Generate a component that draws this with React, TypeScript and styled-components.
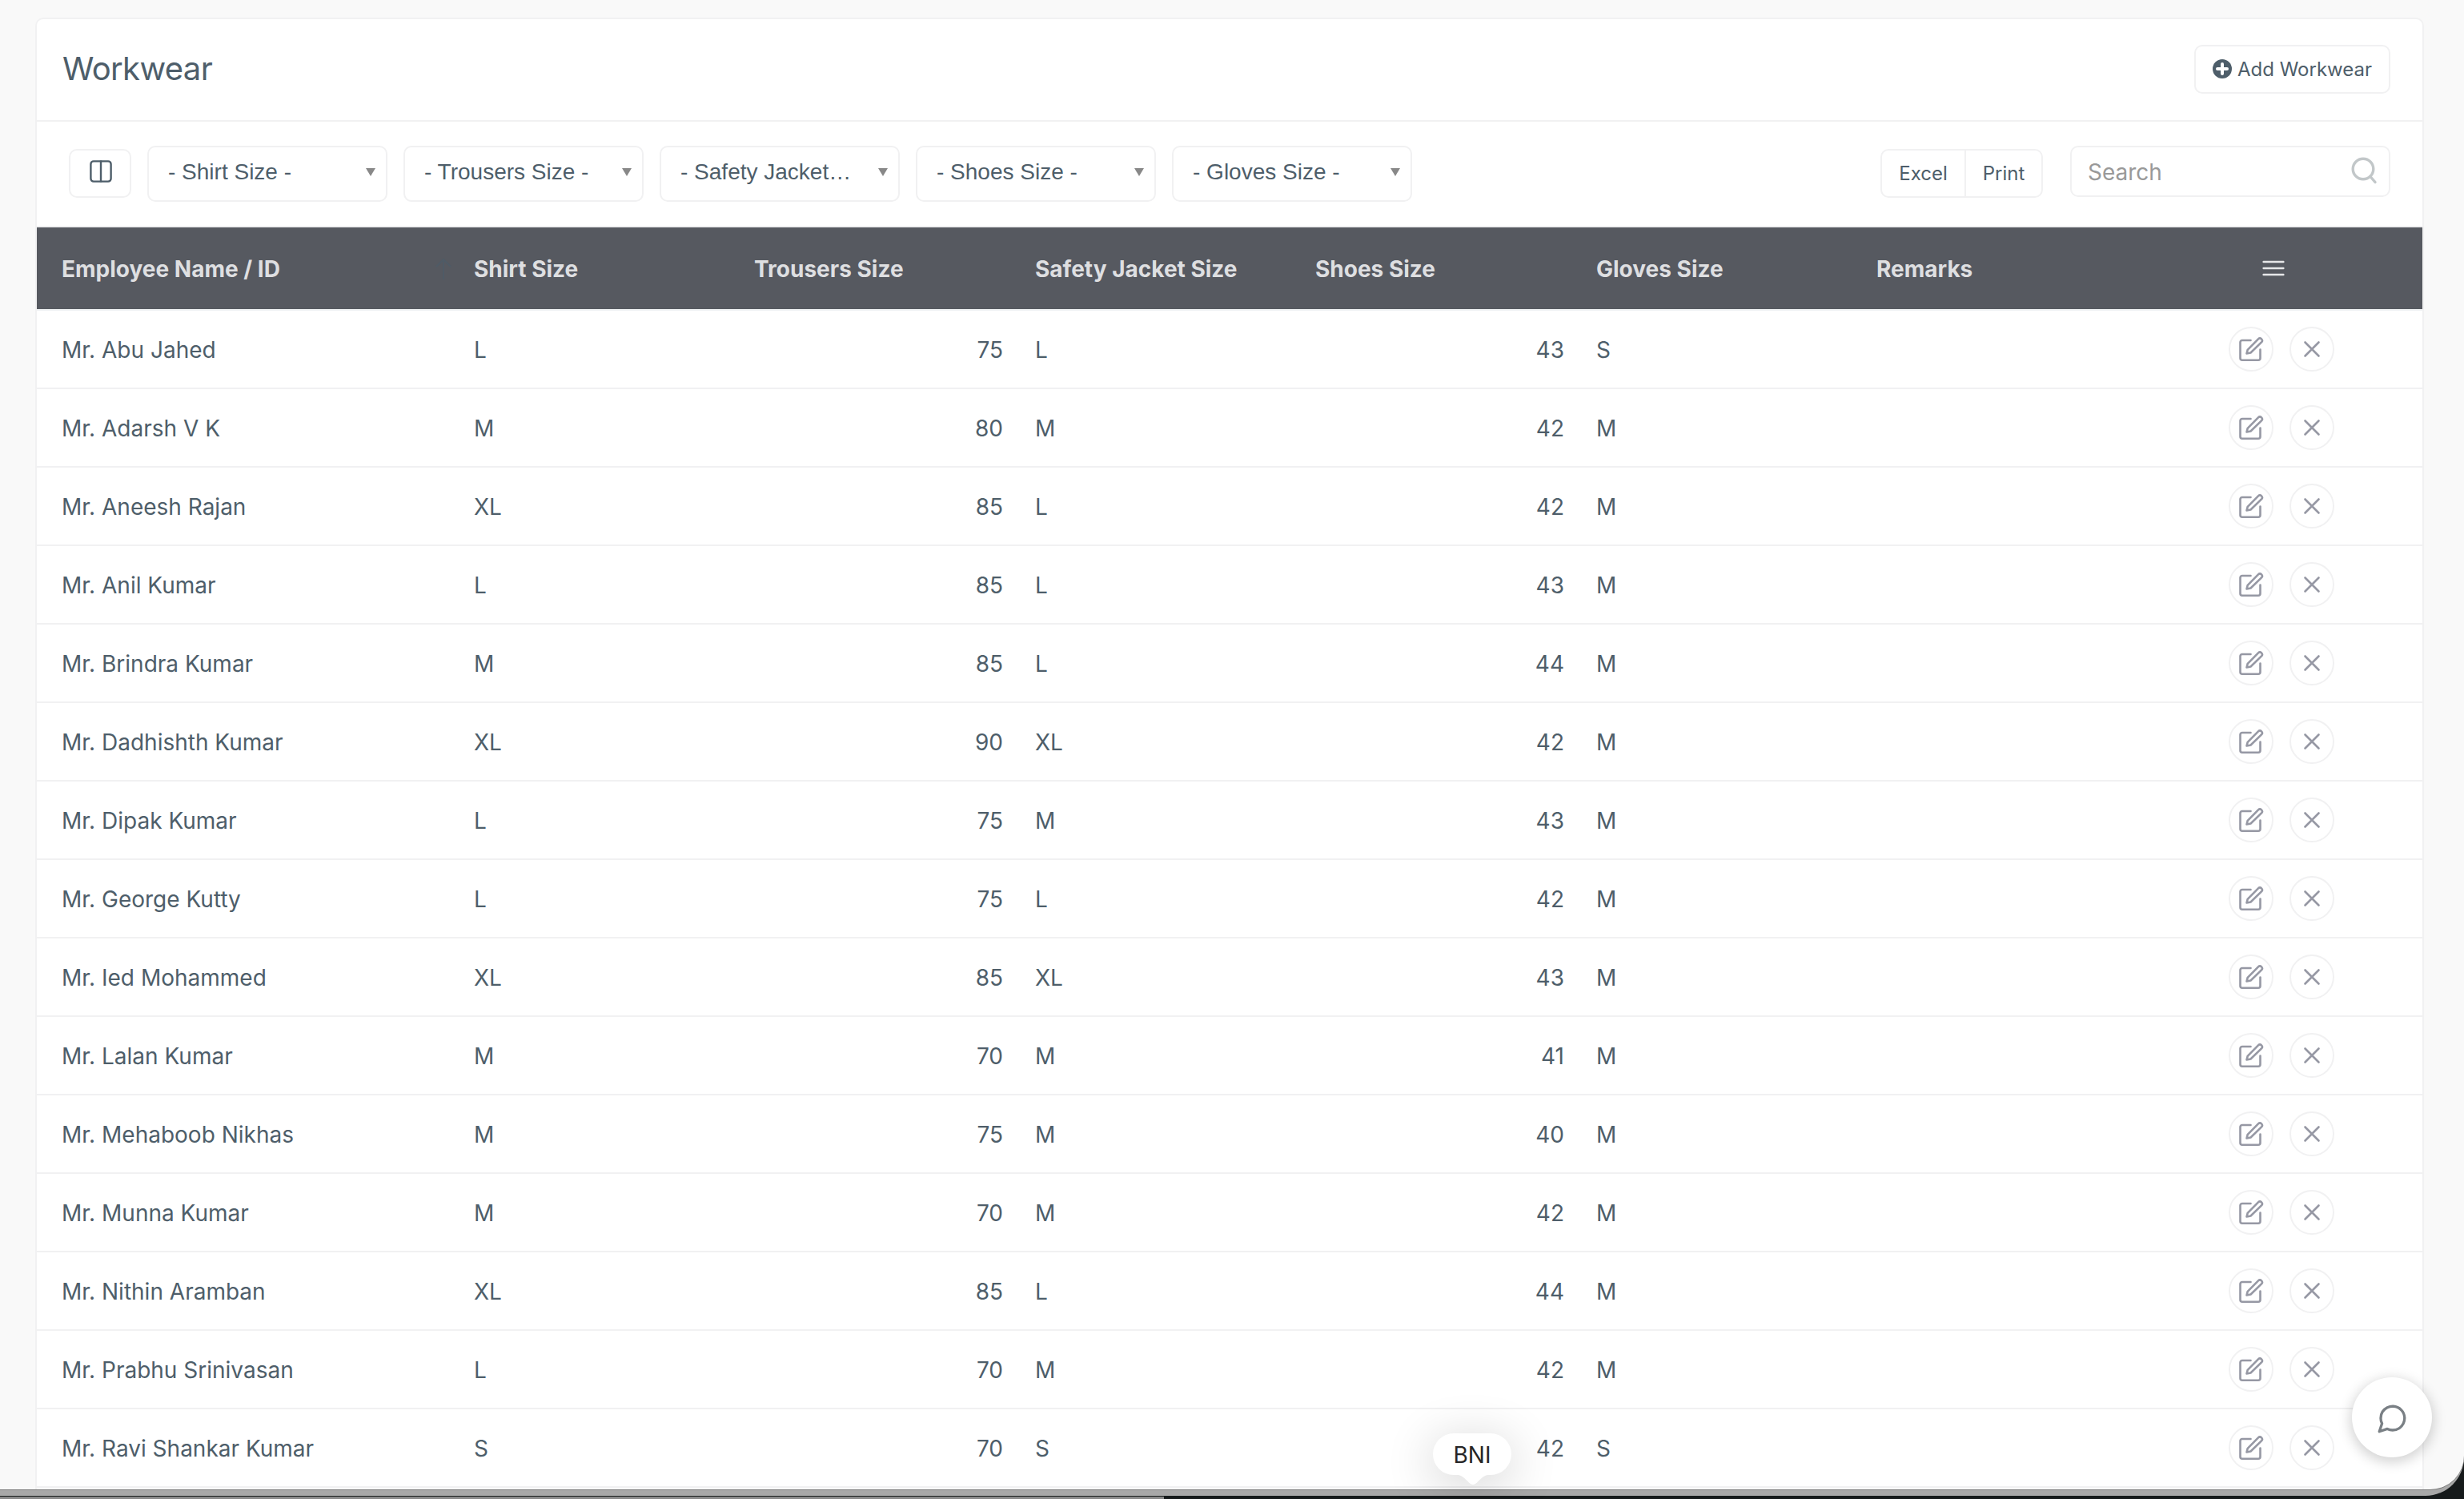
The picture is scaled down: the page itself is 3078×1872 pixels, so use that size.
import React from "react";
import styled, { createGlobalStyle, css } from "styled-components";

const GlobalStyle = createGlobalStyle`
  * {
    box-sizing: border-box;
  }

  body {
    margin: 0;
    background: #1b2022;
    font-family: Inter, "Liberation Sans", sans-serif;
    color: #4e5e6a;
    overflow: hidden;
  }
`;

const Desktop = styled.div`
  position: relative;
  display: flex;
  flex-direction: column;
  height: 1872px;
  overflow: hidden;
  background: #161a1b;
`;

const WindowFrame = styled.div`
  flex: none;
  height: 1868px;
  padding-bottom: 8px;
  border-bottom-right-radius: 48px;
  background: #a8a8a8;
`;

const Page = styled.main`
  height: 1860px;
  padding: 22px 50px 0 44px;
  border-bottom-right-radius: 42px;
  background: #f9f9f9;
  box-shadow: 0 1px 0 #7c7c7c;
  overflow: hidden;
`;

const Card = styled.section`
  height: 1838px;
  border: 2px solid #f1f1f2;
  border-bottom: none;
  border-radius: 10px 10px 0 0;
  background: #fff;
`;

const CardHeader = styled.header`
  display: flex;
  align-items: center;
  justify-content: space-between;
  height: 128px;
  padding: 0 40px 2px 32px;
  border-bottom: 2px solid #f1f1f2;
`;

const Title = styled.h1`
  margin: 0;
  font-size: 40px;
  font-weight: 400;
  line-height: 48px;
  letter-spacing: -0.65px;
`;

const buttonBase = css`
  display: flex;
  align-items: center;
  justify-content: center;
  padding: 0;
  border: 2px solid #f1f1f2;
  border-radius: 10px;
  background: #fff;
  color: #4e5e6a;
  font-family: inherit;
`;

const AddButton = styled.button`
  ${buttonBase}
  gap: 7px;
  width: 245px;
  height: 61px;
  font-size: 24px;
`;

const Toolbar = styled.div`
  display: flex;
  align-items: flex-start;
  height: 132px;
  padding: 30px 40px 0 40px;
  border-bottom: 2px solid #f1f1f2;
`;

const ColumnsButton = styled.button`
  ${buttonBase}
  width: 78px;
  height: 61px;
  margin: 4px 20px 0 0;
  padding: 0 0 5px 2px;
`;

const Filter = styled.div`
  display: flex;
  align-items: center;
  justify-content: space-between;
  width: 300px;
  height: 70px;
  margin-right: 20px;
  padding: 0 13px 5px 24px;
  border: 2px solid #f1f1f2;
  border-radius: 10px;
  font-family: "Liberation Sans", Arial, sans-serif;
  font-size: 28px;
  line-height: 34px;
  white-space: nowrap;
`;

const Caret = styled.span`
  width: 0;
  border: 6px solid transparent;
  border-top: 10px solid #888;
  border-bottom: none;
`;

const ExportGroup = styled.div`
  display: flex;
  width: 203px;
  height: 61px;
  margin: 4px 34px 0 auto;
  border: 2px solid #f1f1f2;
  border-radius: 10px;
`;

const ExportButton = styled.button<{ $width: number }>`
  width: ${(p) => p.$width}px;
  padding: 0;
  border: none;
  background: none;
  color: #4e5e6a;
  font-family: inherit;
  font-size: 24px;

  & + & {
    border-left: 2px solid #f1f1f2;
  }
`;

const SearchBox = styled.label`
  display: flex;
  align-items: center;
  width: 400px;
  height: 64px;
  padding: 0 14px 0 20px;
  border: 2px solid #f1f1f2;
  border-radius: 10px;
`;

const SearchInput = styled.input`
  flex: 1;
  min-width: 0;
  padding: 2px 0 0;
  border: none;
  outline: none;
  background: none;
  font-family: inherit;
  font-size: 28px;

  &::placeholder {
    color: #999;
    opacity: 1;
  }
`;

const rowGrid = css`
  display: grid;
  grid-template-columns: 516px 350px 351px 350px 351px 350px 350px 362px;
  align-items: center;
`;

const HeadRow = styled.div`
  ${rowGrid}
  height: 104px;
  border-bottom: 2px solid #eff1f3;
  background: #565960;
  background-clip: padding-box;
  color: #dedfe1;
  font-size: 28px;
  font-weight: 700;
`;

const Row = styled.div`
  ${rowGrid}
  height: 98px;
  border-bottom: 2px solid #f1f1f2;
  font-size: 28px;
`;

const Cell = styled.div<{ $right?: boolean }>`
  display: flex;
  align-items: center;
  justify-content: ${(p) => (p.$right ? "flex-end" : "flex-start")};
  padding: 2px ${(p) => (p.$right ? 10 : 0)}px 0 30px;
  white-space: nowrap;

  &:first-child {
    padding-left: 31px;
  }
`;

const SortArrow = styled.svg`
  margin: 0 -3px 0 auto;
`;

const MenuCell = styled.div`
  display: flex;
  padding-left: 162px;
`;

const Actions = styled.div`
  display: flex;
  gap: 20px;
  padding-left: 120px;
`;

const RoundButton = styled.button`
  ${buttonBase}
  width: 56px;
  height: 56px;
  border-radius: 50%;
  color: #9698a4;
`;

const ChatButton = styled.button`
  position: absolute;
  left: 2938px;
  top: 1720px;
  display: flex;
  align-items: center;
  justify-content: center;
  width: 100px;
  height: 100px;
  padding: 3px 0 0;
  border: none;
  border-radius: 50%;
  background: #fff;
  color: #7a8085;
  box-shadow: 0 4px 16px 2px rgba(0, 0, 0, 0.18);
`;

const DockTip = styled.div`
  position: absolute;
  left: 1790px;
  top: 1790px;
  width: 98px;
  height: 52px;
  border-radius: 26px;
  background: #fff;
  color: #262626;
  font-size: 28px;
  line-height: 54px;
  text-align: center;
  box-shadow: 0 10px 60px 4px rgba(0, 0, 0, 0.16);
`;

const TipPointer = styled.svg`
  position: absolute;
  left: 27px;
  top: 51px;
`;

const DesktopStrip = styled.div`
  flex: none;
  width: 1454px;
  height: 3px;
  margin-top: 1px;
  background: #8a8a8a;
`;

const PlusCircle = () => (
  <svg width="24" height="24" viewBox="0 0 24 24">
    <circle cx="12" cy="12" r="12" fill="currentColor" />
    <path d="M12 6v12M6 12h12" stroke="#fff" strokeWidth="4" strokeLinecap="round" />
  </svg>
);

const ColumnsIcon = () => (
  <svg width="28" height="28" viewBox="0 0 28 28" fill="none" stroke="currentColor" strokeWidth="2.4">
    <rect x="1.4" y="1.4" width="25.2" height="25.2" rx="3.5" />
    <path d="M14 0.5v27" />
  </svg>
);

const SearchIcon = () => (
  <svg width="34" height="36" viewBox="0 0 34 36" fill="none" stroke="#c2c7c9" strokeWidth="3.4">
    <circle cx="16" cy="15" r="12.8" />
    <path d="M25 24.5L31 31.5" strokeLinecap="round" />
  </svg>
);

const MenuIcon = () => (
  <svg width="28" height="22" viewBox="0 0 28 22" stroke="#e6e7e8" strokeWidth="2.4" strokeLinecap="round">
    <path d="M1.6 3h24.8M1.6 11h24.8M1.6 19h24.8" />
  </svg>
);

const EditIcon = () => (
  <svg
    width="32"
    height="32"
    viewBox="0 0 32 32"
    fill="none"
    stroke="currentColor"
    strokeWidth="2.6"
    strokeLinecap="round"
    strokeLinejoin="round"
  >
    <path d="M15.5 5H5a2.5 2.5 0 0 0-2.5 2.5v19.7A2.5 2.5 0 0 0 5 29.7h20a2.5 2.5 0 0 0 2.5-2.5V16.5" />
    <path d="M10.5 21.5l1.2-4.6L25 3.4a2.8 2.8 0 0 1 4 4L15.5 20.5z" />
  </svg>
);

const CloseIcon = () => (
  <svg width="32" height="32" viewBox="0 0 32 32" fill="none" stroke="currentColor" strokeWidth="2.6" strokeLinecap="round">
    <path d="M24.5 7.5l-17 17M7.5 7.5l17 17" />
  </svg>
);

const ChatIcon = () => (
  <svg
    width="42"
    height="42"
    viewBox="0 0 24 24"
    fill="none"
    stroke="currentColor"
    strokeWidth="1.9"
    strokeLinejoin="round"
  >
    <path d="M21 11.5a8.38 8.38 0 0 1-.9 3.8 8.5 8.5 0 0 1-7.6 4.7 8.38 8.38 0 0 1-3.8-.9L3 21l1.9-5.7a8.38 8.38 0 0 1-.9-3.8 8.5 8.5 0 0 1 4.7-7.6 8.38 8.38 0 0 1 3.8-.9h.5a8.48 8.48 0 0 1 8 8v.5z" />
  </svg>
);

const filters = [
  "- Shirt Size -",
  "- Trousers Size -",
  "- Safety Jacket…",
  "- Shoes Size -",
  "- Gloves Size -",
];

const employees = [
  { name: "Mr. Abu Jahed", shirt: "L", trousers: 75, jacket: "L", shoes: 43, gloves: "S" },
  { name: "Mr. Adarsh V K", shirt: "M", trousers: 80, jacket: "M", shoes: 42, gloves: "M" },
  { name: "Mr. Aneesh Rajan", shirt: "XL", trousers: 85, jacket: "L", shoes: 42, gloves: "M" },
  { name: "Mr. Anil Kumar", shirt: "L", trousers: 85, jacket: "L", shoes: 43, gloves: "M" },
  { name: "Mr. Brindra Kumar", shirt: "M", trousers: 85, jacket: "L", shoes: 44, gloves: "M" },
  { name: "Mr. Dadhishth Kumar", shirt: "XL", trousers: 90, jacket: "XL", shoes: 42, gloves: "M" },
  { name: "Mr. Dipak Kumar", shirt: "L", trousers: 75, jacket: "M", shoes: 43, gloves: "M" },
  { name: "Mr. George Kutty", shirt: "L", trousers: 75, jacket: "L", shoes: 42, gloves: "M" },
  { name: "Mr. Ied Mohammed", shirt: "XL", trousers: 85, jacket: "XL", shoes: 43, gloves: "M" },
  { name: "Mr. Lalan Kumar", shirt: "M", trousers: 70, jacket: "M", shoes: 41, gloves: "M" },
  { name: "Mr. Mehaboob Nikhas", shirt: "M", trousers: 75, jacket: "M", shoes: 40, gloves: "M" },
  { name: "Mr. Munna Kumar", shirt: "M", trousers: 70, jacket: "M", shoes: 42, gloves: "M" },
  { name: "Mr. Nithin Aramban", shirt: "XL", trousers: 85, jacket: "L", shoes: 44, gloves: "M" },
  { name: "Mr. Prabhu Srinivasan", shirt: "L", trousers: 70, jacket: "M", shoes: 42, gloves: "M" },
  { name: "Mr. Ravi Shankar Kumar", shirt: "S", trousers: 70, jacket: "S", shoes: 42, gloves: "S" },
];

function App() {
  return (
    <Desktop>
      <GlobalStyle />
      <WindowFrame>
        <Page>
          <Card>
            <CardHeader>
              <Title>Workwear</Title>
              <AddButton>
                <PlusCircle />
                Add Workwear
              </AddButton>
            </CardHeader>

            <Toolbar>
              <ColumnsButton>
                <ColumnsIcon />
              </ColumnsButton>
              {filters.map((label) => (
                <Filter key={label}>
                  {label}
                  <Caret />
                </Filter>
              ))}
              <ExportGroup>
                <ExportButton $width={103}>Excel</ExportButton>
                <ExportButton $width={96}>Print</ExportButton>
              </ExportGroup>
              <SearchBox>
                <SearchInput placeholder="Search" />
                <SearchIcon />
              </SearchBox>
            </Toolbar>

            <HeadRow>
              <Cell>
                Employee Name / ID
                <SortArrow width="22" height="28" viewBox="0 0 22 28" fill="none" stroke="#4f5b66" strokeWidth="2">
                  <path d="M11 27V2M2 11l9-9 9 9" />
                </SortArrow>
              </Cell>
              <Cell>Shirt Size</Cell>
              <Cell>Trousers Size</Cell>
              <Cell>Safety Jacket Size</Cell>
              <Cell>Shoes Size</Cell>
              <Cell>Gloves Size</Cell>
              <Cell>Remarks</Cell>
              <MenuCell>
                <MenuIcon />
              </MenuCell>
            </HeadRow>

            {employees.map((e) => (
              <Row key={e.name}>
                <Cell>{e.name}</Cell>
                <Cell>{e.shirt}</Cell>
                <Cell $right>{e.trousers}</Cell>
                <Cell>{e.jacket}</Cell>
                <Cell $right>{e.shoes}</Cell>
                <Cell>{e.gloves}</Cell>
                <Cell />
                <Actions>
                  <RoundButton>
                    <EditIcon />
                  </RoundButton>
                  <RoundButton>
                    <CloseIcon />
                  </RoundButton>
                </Actions>
              </Row>
            ))}
          </Card>
        </Page>
      </WindowFrame>
      <DesktopStrip />

      <ChatButton>
        <ChatIcon />
      </ChatButton>
      <DockTip>
        BNI
        <TipPointer width="46" height="14" viewBox="0 0 46 14" fill="#fff">
          <path d="M0 0C12 1 14 8 20 12Q23 14 26 12C32 8 34 1 46 0z" />
        </TipPointer>
      </DockTip>
    </Desktop>
  );
}

export default App;
